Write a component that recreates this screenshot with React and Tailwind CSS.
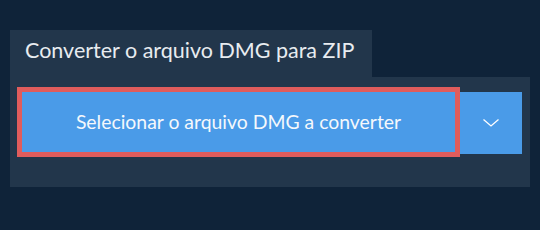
export default function App() {
  return (
    <div className="w-[540px] h-[230px] bg-[#0f2339] pt-[30px] pl-[10px] font-['Lato',sans-serif]">
      <div className="w-[362px] h-[47px] bg-[#22364b] pt-[10px] pl-[15px] text-[21.5px] leading-none text-[#e8ecf0]">
        Converter o arquivo DMG para ZIP
      </div>
      <div className="w-[520px] h-[110px] bg-[#22364b] pt-[10px] pl-[7px]">
        <div className="flex items-start">
          <button className="w-[443px] h-[70px] border-[5px] border-[#e05c5c] bg-[#4a9be8] text-[#f4f8fc] text-[19.4px] flex items-center justify-center">
            Selecionar o arquivo DMG a converter
          </button>
          <button className="mt-[5px] w-[62px] h-[62px] bg-[#4a9be8] flex items-center justify-center">
            <svg width="18" height="10" viewBox="0 0 18 10" fill="none">
              <path d="M1.5 1.5L9 8L16.5 1.5" stroke="white" strokeWidth="1.3" />
            </svg>
          </button>
        </div>
      </div>
    </div>
  );
}
